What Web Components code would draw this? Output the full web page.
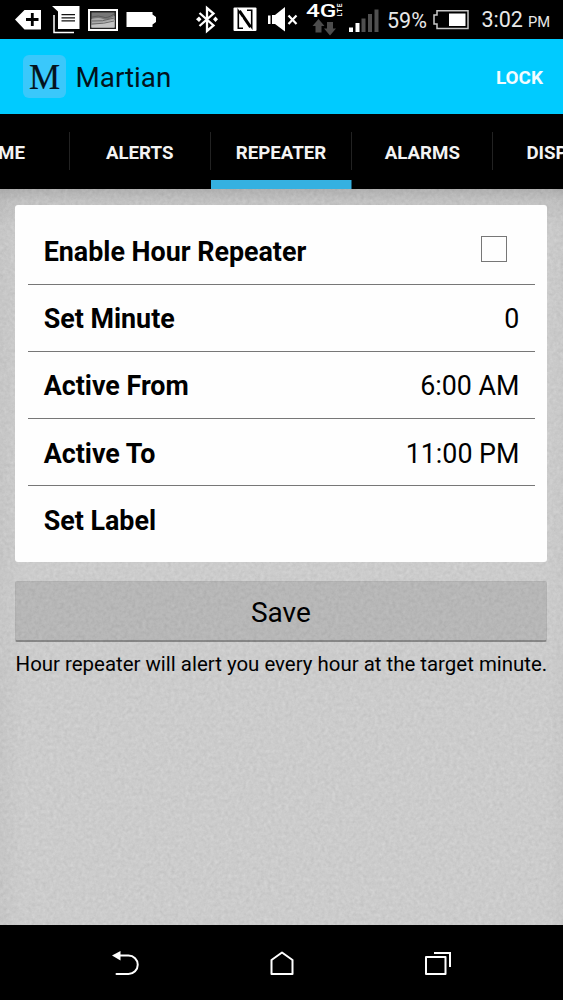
<!DOCTYPE html>
<html lang="en">
<head>
<meta charset="utf-8">
<title>Martian</title>
<style>
  html, body { margin: 0; height: 100%; background: #000; overflow: hidden; }
  body { font-family: Roboto, "Liberation Sans", sans-serif; color: #000; }
</style>
</head>
<body>
<phone-screen>
  <status-bar slot="status"></status-bar>
  <app-header slot="header" heading="Martian" action="LOCK"></app-header>
  <tab-strip slot="tabs">
    <tab-item>HOME</tab-item>
    <tab-item>ALERTS</tab-item>
    <tab-item active>REPEATER</tab-item>
    <tab-item>ALARMS</tab-item>
    <tab-item>DISPLAY</tab-item>
  </tab-strip>
  <settings-card>
    <setting-row label="Enable Hour Repeater"><check-box></check-box></setting-row>
    <setting-row label="Set Minute">0</setting-row>
    <setting-row label="Active From">6:00 AM</setting-row>
    <setting-row label="Active To">11:00 PM</setting-row>
    <setting-row label="Set Label"></setting-row>
  </settings-card>
  <save-button>Save</save-button>
  <hint-text>Hour repeater will alert you every hour at the target minute.</hint-text>
  <nav-bar slot="nav"></nav-bar>
</phone-screen>
<script>
const define = (name, html, init) => customElements.define(name, class extends HTMLElement {
  connectedCallback() {
    if (this.shadowRoot) return;
    const root = this.attachShadow({ mode: 'open' });
    root.innerHTML = html;
    if (init) init(this, root);
  }
});

define('phone-screen', `
<style>
  :host { display: flex; flex-direction: column; width: 563px; height: 1000px; overflow: hidden; }
  main { position: relative; flex: 1; min-height: 0; background: #cbcbcb; overflow: hidden; }
  .grain { position: absolute; inset: 0; width: 100%; height: 100%; }
  .shade { position: absolute; inset: 0; background:
    linear-gradient(rgba(0,0,0,.14), rgba(0,0,0,.05) 12px, transparent 40px),
    linear-gradient(90deg, rgba(0,0,0,.03), transparent 24px, transparent 545px, rgba(0,0,0,.02)); }
  .content { position: relative; display: flex; flex-direction: column; padding: 16px 15.600px 0 15.400px; }
</style>
<slot name="status"></slot><slot name="header"></slot><slot name="tabs"></slot>
<main>
  <svg class="grain"><filter id="g" x="0" y="0" width="100%" height="100%" color-interpolation-filters="sRGB">
    <feTurbulence type="fractalNoise" baseFrequency=".28" numOctaves="3" seed="4"/>
    <feColorMatrix values=".06 .06 0 0 .738  .06 .06 0 0 .738  .06 .06 0 0 .738  0 0 0 0 1"/>
  </filter><rect width="100%" height="100%" filter="url(#g)"/></svg>
  <div class="shade"></div>
  <div class="content"><slot></slot></div>
</main>
<slot name="nav"></slot>`);

define('status-bar', `
<style>
  :host { display: flex; align-items: center; height: 39px; background: #000; color: #e8e8e8; flex: none; }
  svg { display: block; flex: none; }
  .level { font-size: 21.500px; margin-left: 7px; width: 45px; white-space: nowrap; }
  .time { font-size: 21.500px; margin-left: 11.500px; white-space: nowrap; }
  .time small { font-size: 14.700px; margin-left: 5px; }
  span { line-height: 39px; padding-top: 2px; }
</style>
<svg width="190" height="39" viewBox="0 0 190 39">
  <path fill="#fff" d="M15 19.500 24.500 10H41V29.500H24.500Z"/>
  <path stroke="#000" stroke-width="2.800" d="M32.300 13V26M26 19.500H38.500"/>
  <path fill="#fff" d="M52 6H79.500V29H58V11.500Z"/>
  <path fill="none" stroke="#fff" stroke-width="1.500" d="M54 15V32.500H74"/>
  <path stroke="#111" stroke-width="1.300" d="M61.500 14.700H75M61.500 17.800H75M61.500 20.900H75"/>
  <path fill="#fff" d="M88 9H118V31H88Z"/>
  <path fill="#222" d="M90 11H116V29H90Z"/>
  <path fill="#777" d="M91.500 12.500H114.500V27.500H91.500Z"/>
  <path fill="#aaa" d="M91.500 19Q99 17 103 19T114.500 16V27.500H91.500Z"/>
  <path fill="#c4c4c4" d="M91.500 25Q103 23 114.500 20V27.500H91.500Z"/>
  <path fill="none" stroke="#555" stroke-width=".8" d="M92 17Q99 15 103 17T114 14M92 21Q102 22 114 18M92 24Q104 24 114 21"/>
  <path fill="#fff" d="M126.500 12H152.500V14.500L156 17V22L152.500 24.500V27H126.500Z"/>
</svg>
<svg width="190" height="39" viewBox="190 0 190 39">
  <path fill="none" stroke="#fff" stroke-width="2.300" d="M199.500 13 213.500 25.500 207 31V8L213.500 13.500 199.500 26"/>
  <path fill="#fff" d="M196 19.300 199 16.500 201.500 19.300 199 22ZM213 19.300 215.500 16.500 218 19.300 215.500 22Z"/>
  <path fill="#fff" d="M234.500 7.500H255.500Q256.500 7.500 256.500 8.500V30Q256.500 31 255.500 31H234.500Q233.500 31 233.500 30V8.500Q233.500 7.500 234.500 7.500Z"/>
  <path fill="none" stroke="#000" stroke-width="1.600" d="M243 28.300H238.300V10.500L250 27.500M240 10.500 251.700 27.500V10.300H247"/>
  <path stroke="#fff" stroke-width="2.200" d="M241.500 17.500V27M248.600 12V19"/>
  <path fill="#fff" d="M268 15.500H270.500V24H268ZM272 15H275L285 7V31.500L275 24H272Z"/>
  <path stroke="#fff" stroke-width="2.200" d="M288.500 15.500 296.500 24M296.500 15.500 288.500 24"/>
  <text x="306" y="16.500" fill="#fff" font-family="Roboto, sans-serif" font-size="17.500" font-weight="500" textLength="30.500" lengthAdjust="spacingAndGlyphs">4G</text>
  <text transform="translate(341.500 16.500) rotate(-90)" fill="#fff" font-family="Roboto, sans-serif" font-size="6.500" font-weight="700" textLength="13" lengthAdjust="spacing">LTE</text>
  <path fill="#4c4c4c" d="M318.500 19 324.500 26H321.500V32.500H315.500V26H312.500ZM330 35.500 336 28.500H333V22H327V28.500H324Z"/>
  <path fill="#fff" d="M349 27.500H353V32H349ZM355.500 23H359.500V32H355.500Z"/>
  <path fill="#505050" d="M361.500 18.500H365.500V32H361.500ZM368 14H372V32H368ZM374.500 9.500H378.500V32H374.500Z"/>
</svg>
<span class="level">59%</span>
<svg width="38" height="39" viewBox="432 0 38 39">
  <path fill="none" stroke="#c8c8c8" stroke-width="1.500" d="M437 10.800H468V28.500H437V24H434V15H437Z"/>
  <path fill="#fff" d="M449 13.500H465.500V26H449Z"/>
</svg>
<span class="time">3:02<small>PM</small></span>`);

define('app-header', `
<style>
  :host { display: flex; align-items: center; height: 75px; box-sizing: border-box; flex: none; background: #00cbff; padding: 0 20px 0 23px; }
  .logo { width: 43px; height: 43px; border-radius: 6px; background: #3ac8fb; flex: none; display: grid; place-items: center; }
  .logo b { font: 400 35px/43px "Liberation Serif", serif; color: #04131c; -webkit-text-stroke: .2px #04131c; padding-top: 1px; }
  .title { font-size: 27.800px; color: #03131c; margin-left: 9.500px; line-height: 75px; padding-top: 2px; }
  .action { margin-left: auto; font-size: 18.900px; font-weight: 700; color: #f2fcff; padding-top: 1px; }
</style>
<div class="logo"><b>M</b></div><span class="title"></span><span class="action"></span>`, (el, root) => {
  root.querySelector('.title').textContent = el.getAttribute('heading');
  root.querySelector('.action').textContent = el.getAttribute('action');
});

define('tab-strip', `
<style>
  :host { display: flex; justify-content: center; height: 75px; flex: none; background: #000; overflow: hidden; }
</style><slot></slot>`);

define('tab-item', `
<style>
  :host { display: flex; flex: none; width: 141.300px; height: 75px; box-sizing: border-box; align-items: center; justify-content: center;
    color: #f3f3f3; font-size: 18.700px; font-weight: 700;
    background: linear-gradient(#222, #222) right 18px / 1px 38px no-repeat; }
  :host([active]) { background: linear-gradient(#222, #222) right 18px / 1px 38px no-repeat, linear-gradient(#35b1e1, #35b1e1) 0 100% / 140.500px 9px no-repeat; }
  span { padding: 3px 1px 0 0; }
</style><span><slot></slot></span>`);

define('settings-card', `
<style>
  :host { display: block; box-sizing: border-box; height: 357px; padding: 12.500px 12.500px; background: #fefefe; border-radius: 3px; }
</style><slot></slot>`);

define('setting-row', `
<style>
  :host { display: flex; align-items: center; justify-content: space-between; height: 67.200px; box-sizing: border-box; padding: 0 15.500px 0 15.800px; border-bottom: 1px solid #777; font-size: 26.800px; }
  :host(:last-child) { border-bottom: 0; }
  span { padding-top: 3px; white-space: nowrap; }
  .label { font-weight: 700; font-size: 26.850px; }
</style><span class="label"></span><span class="value"><slot></slot></span>`, (el, root) => {
  root.querySelector('.label').textContent = el.getAttribute('label');
});

define('check-box', `
<style>
  :host { display: block; width: 26px; height: 26px; box-sizing: border-box; border: 1px solid #777; margin: 0 12.500px 6px 0; }
</style>`);

define('save-button', `
<style>
  :host { display: flex; align-items: center; justify-content: center; height: 61px; box-sizing: border-box; margin: 19px 0 0; background: rgba(0,0,0,.1);
    border: 1px solid rgba(0,0,0,.03); border-bottom: 2px solid rgba(0,0,0,.27); border-radius: 2px; font-size: 28px; }
  span { padding: 2px 1px 0 0; }
</style><span><slot></slot></span>`);

define('hint-text', `
<style>
  :host { display: flex; justify-content: center; font-size: 20.430px; line-height: 24px; margin-top: 10px; white-space: nowrap; }
</style><span><slot></slot></span>`);

define('nav-bar', `
<style>
  :host { display: flex; justify-content: space-between; align-items: center; height: 75px; box-sizing: border-box; flex: none; padding: 1px 111px 0; background: #000; }
  svg { display: block; fill: none; stroke: #fff; stroke-width: 2; }
</style>
<svg width="29" height="27" viewBox="111 949 29 27"><path stroke-linecap="round" d="M118 954.500H128.500A9.250 9.250 0 0 1 128.500 973H116.500"/><path fill="#fff" stroke="none" d="M112 954.500 120.500 950V959.500Z"/></svg>
<svg width="25" height="27" viewBox="269.500 949 25 27"><path stroke-linejoin="round" d="M271 973V959L281.500 951.500 292 959V973Z"/></svg>
<svg width="28" height="27" viewBox="424 949 28 27"><path stroke-linejoin="round" d="M426 956H445.500V973H426Z"/><path d="M434 952H450V966"/></svg>`);
</script>
</body>
</html>
